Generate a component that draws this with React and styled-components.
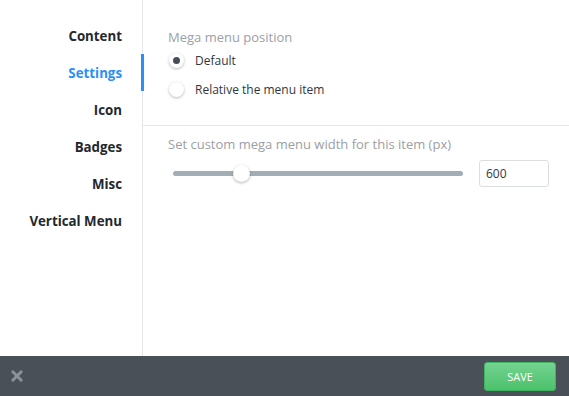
import { useState } from 'react';
import styled, { createGlobalStyle } from 'styled-components';

const GlobalStyle = createGlobalStyle`
  html, body {
    margin: 0;
    padding: 0;
    background: #ffffff;
    font-family: "Open Sans", "Noto Sans", sans-serif;
  }
  * { box-sizing: border-box; }
`;

const Frame = styled.div`
  display: flex;
  flex-direction: column;
  width: 569px;
  height: 396px;
`;

const Body = styled.div`
  display: flex;
  flex: 1;
  min-height: 0;
`;

const Sidebar = styled.nav`
  width: 143px;
  flex-shrink: 0;
  border-right: 1px solid #e4e6e8;
  padding-top: 17px;
  display: flex;
  flex-direction: column;
`;

const NavItem = styled.div`
  position: relative;
  height: 37px;
  display: flex;
  align-items: center;
  justify-content: flex-end;
  padding-right: 20px;
  font-size: 13.3px;
  font-weight: 700;
  color: ${p => (p.$active ? '#2b8ff5' : '#23282d')};
  cursor: pointer;

  &::after {
    content: '';
    display: ${p => (p.$active ? 'block' : 'none')};
    position: absolute;
    top: 0;
    right: -2px;
    width: 3px;
    height: 100%;
    background: #2b8ff5;
  }
`;

const Main = styled.div`
  flex: 1;
  display: flex;
  flex-direction: column;
`;

const Section = styled.div`
  padding: ${p => p.$pad};
  border-bottom: ${p => (p.$divided ? '1px solid #e4e6e8' : 'none')};
`;

const Label = styled.div`
  font-size: 13px;
  color: #9ca0a5;
  line-height: 18px;
`;

const RadioList = styled.div`
  display: flex;
  flex-direction: column;
  gap: 12px;
  margin-top: 6px;
`;

const RadioRow = styled.label`
  display: flex;
  align-items: center;
  gap: 11px;
  padding-left: 1px;
  font-size: 12px;
  color: #32373c;
  cursor: pointer;
`;

const RadioDot = styled.span`
  width: 15px;
  height: 15px;
  border-radius: 50%;
  background: #ffffff;
  box-shadow: 0 1px 3px rgba(0, 0, 0, 0.28);
  display: flex;
  align-items: center;
  justify-content: center;

  &::before {
    content: '';
    width: 7px;
    height: 7px;
    border-radius: 50%;
    background: ${p => (p.$checked ? '#474d55' : 'transparent')};
  }
`;

const SliderRow = styled.div`
  display: flex;
  align-items: center;
  gap: 16px;
  margin-top: 7px;
  padding-left: 5px;
`;

const Track = styled.div`
  position: relative;
  width: 290px;
  height: 5px;
  border-radius: 3px;
  background: #a3adb5;
`;

const Thumb = styled.span`
  position: absolute;
  top: 50%;
  width: 17px;
  height: 17px;
  margin: -8.5px 0 0 -8.5px;
  border-radius: 50%;
  background: #ffffff;
  box-shadow: 0 1px 3px rgba(0, 0, 0, 0.3);
`;

const NumberInput = styled.input`
  width: 70px;
  height: 27px;
  border: 1px solid #dcdfe2;
  border-radius: 3px;
  padding: 0 6px;
  font-family: inherit;
  font-size: 12px;
  color: #32373c;
  outline: none;
`;

const Footer = styled.footer`
  height: 40px;
  background: #4a5057;
  display: flex;
  align-items: center;
  justify-content: space-between;
  padding: 0 13px 0 11px;
`;

const CloseButton = styled.button`
  border: 0;
  background: none;
  padding: 0;
  display: flex;
  cursor: pointer;
`;

const SaveButton = styled.button`
  width: 72px;
  height: 29px;
  border: 1px solid #3fb35f;
  border-radius: 3px;
  background: linear-gradient(#74d391, #4bc16b);
  color: #ffffff;
  font-family: inherit;
  font-size: 11px;
  cursor: pointer;
`;

const tabs = ['Content', 'Settings', 'Icon', 'Badges', 'Misc', 'Vertical Menu'];

export default function App() {
  const [position, setPosition] = useState('default');
  const width = 600;
  const ratio = 0.235;

  return (
    <Frame>
      <GlobalStyle />
      <Body>
        <Sidebar>
          {tabs.map(t => (
            <NavItem key={t} $active={t === 'Settings'}>{t}</NavItem>
          ))}
        </Sidebar>
        <Main>
          <Section $divided $pad="28px 25px 27px">
            <Label>Mega menu position</Label>
            <RadioList>
              <RadioRow onClick={() => setPosition('default')}>
                <RadioDot $checked={position === 'default'} />
                Default
              </RadioRow>
              <RadioRow onClick={() => setPosition('relative')}>
                <RadioDot $checked={position === 'relative'} />
                Relative the menu item
              </RadioRow>
            </RadioList>
          </Section>
          <Section $pad="9px 25px">
            <Label>Set custom mega menu width for this item (px)</Label>
            <SliderRow>
              <Track>
                <Thumb style={{ left: `${ratio * 100}%` }} />
              </Track>
              <NumberInput defaultValue={width} />
            </SliderRow>
          </Section>
        </Main>
      </Body>
      <Footer>
        <CloseButton aria-label="close">
          <svg width="12" height="12" viewBox="0 0 12 12">
            <path d="M2 2 L10 10 M10 2 L2 10" stroke="#8c9299" strokeWidth="3" strokeLinecap="square" />
          </svg>
        </CloseButton>
        <SaveButton>SAVE</SaveButton>
      </Footer>
    </Frame>
  );
}
